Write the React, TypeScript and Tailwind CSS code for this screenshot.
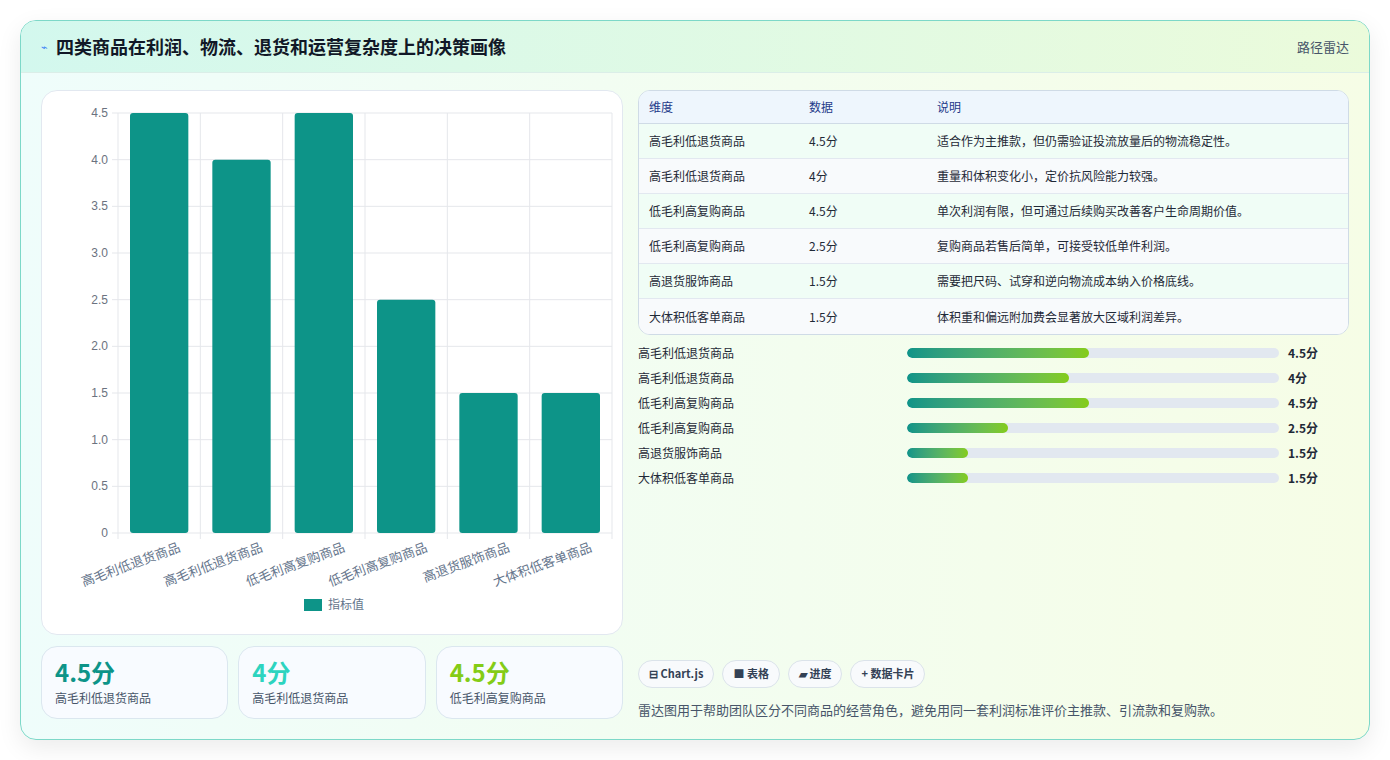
import React from "react";

const names = ["高毛利低退货商品","高毛利低退货商品","低毛利高复购商品","低毛利高复购商品","高退货服饰商品","大体积低客单商品"];
const vals = [4.5,4,4.5,2.5,1.5,1.5];
const descs = ["适合作为主推款，但仍需验证投流放量后的物流稳定性。","重量和体积变化小，定价抗风险能力较强。","单次利润有限，但可通过后续购买改善客户生命周期价值。","复购商品若售后简单，可接受较低单件利润。","需要把尺码、试穿和逆向物流成本纳入价格底线。","体积重和偏远附加费会显著放大区域利润差异。"];
const fmt = (v: number) => `${v}分`;

function Chart() {
  const x0 = 76, x1 = 570, yTop = 22, yBot = 442;
  const ticks = [0,0.5,1,1.5,2,2.5,3,3.5,4,4.5];
  const cw = (x1 - x0) / 6;
  const y = (v: number) => yBot - (v / 4.5) * (yBot - yTop);
  return (
    <svg width="582" height="543" style={{ fontFamily: "'Liberation Sans','Noto Sans CJK SC',sans-serif" }}>
      {ticks.map(t => (
        <g key={t}>
          <line x1={x0 - 6} x2={x1} y1={y(t)} y2={y(t)} stroke="#e5e7eb" />
          <text x={x0 - 10} y={y(t) + 4} textAnchor="end" fontSize="12" fill="#6b7280">{t === 0 ? "0" : t.toFixed(1)}</text>
        </g>
      ))}
      {Array.from({ length: 7 }).map((_, i) => (
        <line key={i} x1={x0 + i * cw} x2={x0 + i * cw} y1={yTop} y2={yBot + 6} stroke="#e5e7eb" />
      ))}
      {vals.map((v, i) => (
        <g key={i}>
          <rect x={x0 + i * cw + 12} y={y(v)} width={cw - 24} height={yBot - y(v)} rx="3" fill="#0d9488" />
          <text transform={`translate(${x0 + i * cw + cw / 2 + 22},${yBot + 18}) rotate(-20)`} textAnchor="end" fontSize="13" fill="#64748b">{names[i]}</text>
        </g>
      ))}
      <rect x="262" y="508" width="18" height="12" fill="#0d9488" />
      <text x="286" y="518" fontSize="12" fill="#64748b">指标值</text>
    </svg>
  );
}

export default function App() {
  return (
    <div className="w-[1390px] h-[760px] bg-white p-5 pb-5" style={{ fontFamily: "'Noto Sans CJK SC','Liberation Sans',sans-serif" }}>
      <div className="h-[720px] rounded-2xl border border-[#7dd8c8] overflow-hidden flex flex-col bg-gradient-to-r from-[#effdfb] to-[#f6fde6] shadow-[0_8px_24px_rgba(0,0,0,0.08)]">
        <div className="h-[55px] flex items-center justify-between px-5 bg-gradient-to-r from-[#d3f8ee] to-[#ebfbdb] border-b border-[#dbeee8]">
          <div className="flex items-center gap-2">
            <span className="text-[#3b82f6] text-[11px]">⌁</span>
            <span className="text-[18px] font-bold text-[#111827]">四类商品在利润、物流、退货和运营复杂度上的决策画像</span>
          </div>
          <span className="text-[13px] text-[#475569]">路径雷达</span>
        </div>
        <div className="flex-1 flex gap-[15px] px-5 pt-[17px] pb-5">
          <div className="w-[582px] flex flex-col gap-[11px]">
            <div className="h-[545px] bg-white rounded-2xl border border-[#e2e8f0]"><Chart /></div>
            <div className="flex gap-[10px]">
              {[0,1,2].map(i => (
                <div key={i} className="flex-1 h-[73px] rounded-2xl border border-[#dbe7ef] bg-[#f8fbff] px-[13px] pt-[10px]">
                  <div className={`text-[24px] font-bold leading-[30px] ${["text-[#0d9488]","text-[#2dd4bf]","text-[#84cc16]"][i]}`}>{fmt(vals[i])}</div>
                  <div className="text-[12px] text-[#475569] mt-[2px]">{names[i]}</div>
                </div>
              ))}
            </div>
          </div>
          <div className="flex-1 flex flex-col">
            <div className="rounded-xl border border-[#cfdbe6] overflow-hidden bg-white text-[12px]">
              <div className="flex h-[33px] items-center bg-[#eef6fd] border-b border-[#cfdbe6] text-[#1e3a8a]">
                <div className="w-[170px] pl-[10px]">维度</div><div className="w-[128px]">数据</div><div>说明</div>
              </div>
              {vals.map((v, i) => (
                <div key={i} className={`flex h-[35px] items-center text-[#1f2937] ${i % 2 ? "bg-[#f8fafc]" : "bg-[#f0fdf6]"} ${i < 5 ? "border-b border-[#e2e8f0]" : ""}`}>
                  <div className="w-[170px] pl-[10px]">{names[i]}</div><div className="w-[128px]">{fmt(v)}</div><div>{descs[i]}</div>
                </div>
              ))}
            </div>
            <div className="mt-[10px] flex flex-col gap-[9px] text-[12px] text-[#1f2937]">
              {vals.map((v, i) => (
                <div key={i} className="flex items-center h-[16px]">
                  <div className="w-[269px]">{names[i]}</div>
                  <div className="w-[372px] h-[10px] rounded-full bg-[#e2e8f0] overflow-hidden">
                    <div className="h-full rounded-full bg-gradient-to-r from-[#0d9488] to-[#84cc16]" style={{ width: `${(v / 9.2) * 100}%` }} />
                  </div>
                  <div className="ml-[9px] font-bold">{fmt(v)}</div>
                </div>
              ))}
            </div>
            <div className="mt-auto">
              <div className="flex gap-[8px] text-[11px] font-bold text-[#334155]">
                {["⊟ Chart.js","■ 表格","▰ 进度","+ 数据卡片"].map(t => (
                  <span key={t} className="h-[28px] px-[10px] flex items-center rounded-full border border-[#dbe3ea] bg-[#f8fafc]">{t}</span>
                ))}
              </div>
              <div className="mt-[12px] text-[13px] text-[#475569]">雷达图用于帮助团队区分不同商品的经营角色，避免用同一套利润标准评价主推款、引流款和复购款。</div>
            </div>
          </div>
        </div>
      </div>
    </div>
  );
}
